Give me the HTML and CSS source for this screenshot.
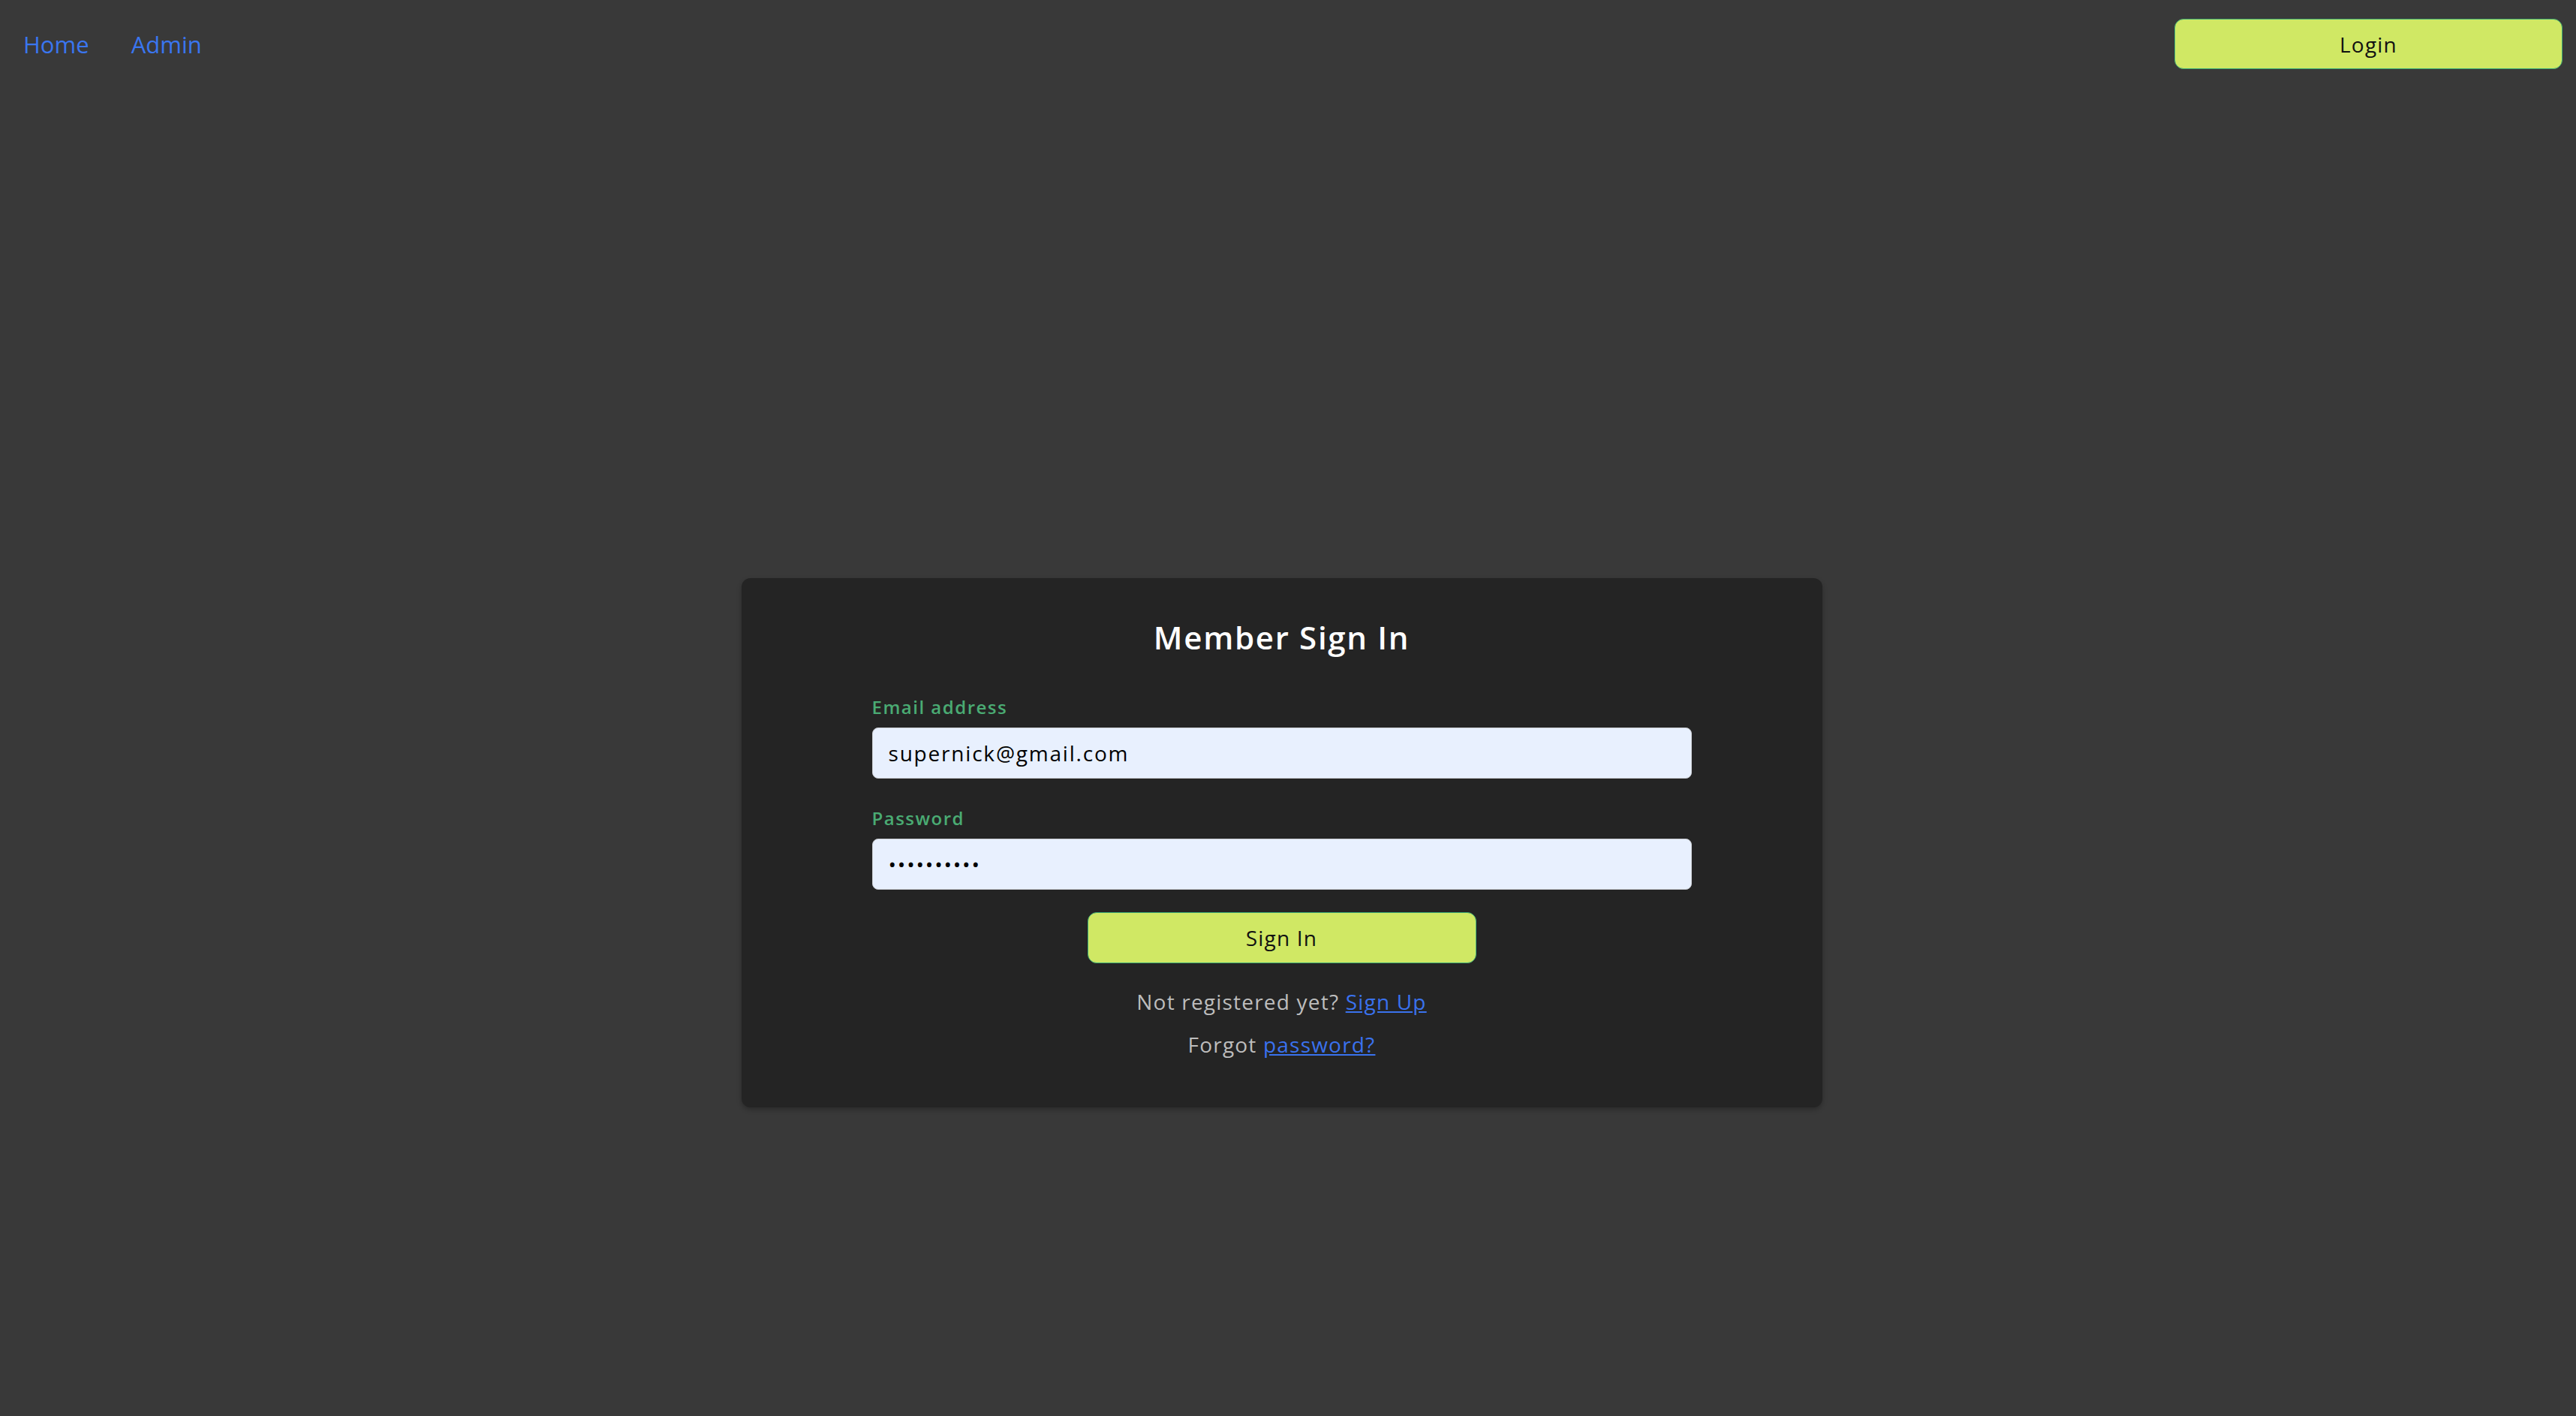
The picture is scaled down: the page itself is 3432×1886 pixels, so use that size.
FILE: index.html
```html
<!DOCTYPE html>
<html lang="en">
<head>
<meta charset="utf-8">
<title>Member Sign In</title>
<link rel="stylesheet" href="styles.css">
</head>
<body>
<header class="topbar">
  <nav class="nav">
    <a class="nav-link" href="#">Home</a>
    <a class="nav-link" href="#">Admin</a>
  </nav>
  <button class="btn btn-login" type="button">Login</button>
</header>
<main class="main">
  <section class="card">
    <h1 class="card-title">Member Sign In</h1>
    <form class="form">
      <label class="field-label" for="email">Email address</label>
      <input class="field-input" id="email" type="email" value="supernick@gmail.com">
      <label class="field-label field-label-pw" for="password">Password</label>
      <input class="field-input" id="password" type="password" value="0123456789">
      <div class="actions">
        <button class="btn btn-signin" type="button">Sign In</button>
      </div>
      <p class="note">Not registered yet? <a class="link" href="#">Sign Up</a></p>
      <p class="note note-second">Forgot <a class="link" href="#">password?</a></p>
    </form>
  </section>
</main>
</body>
</html>
```
FILE: styles.css
```css
html, body {
  margin: 0;
  padding: 0;
}
body {
  background: #393939;
  font-family: "Open Sans", "Liberation Sans", sans-serif;
  min-height: 1886px;
}
.topbar {
  display: flex;
  justify-content: space-between;
  align-items: center;
  padding: 25px 18px 0 31px;
}
.nav {
  display: flex;
  gap: 56px;
}
.nav-link {
  color: #3a76f0;
  text-decoration: none;
  font-size: 31px;
  line-height: 44px;
}
.btn {
  font-family: inherit;
  color: #111;
  background: #d0e864;
  border: 1px solid #3fae74;
  border-radius: 12px;
  font-size: 28px;
  letter-spacing: 1.2px;
  cursor: pointer;
  padding: 0;
}
.btn-login {
  width: 517px;
  height: 67px;
}
.main {
  display: flex;
  justify-content: center;
  padding: 678px 17px 0 0;
}
.card {
  width: 1440px;
  box-sizing: border-box;
  background: #242424;
  border-radius: 12px;
  padding: 49px 0 64px;
  box-shadow: 0 3px 6px rgba(0, 0, 0, 0.25);
}
.card-title {
  margin: 0;
  text-align: center;
  color: #fff;
  font-size: 42px;
  line-height: 60px;
  font-weight: 600;
  letter-spacing: 1.7px;
}
.form {
  width: 1092px;
  margin: 47px auto 0;
  display: flex;
  flex-direction: column;
}
.field-label {
  color: #4aab73;
  font-size: 24px;
  line-height: 32px;
  font-weight: 600;
  letter-spacing: 1.5px;
  margin-bottom: 11px;
}
.field-label-pw {
  margin-top: 37px;
}
.field-input {
  height: 68px;
  box-sizing: border-box;
  background: #e8f0fe;
  border: 1px solid #c9ccd2;
  border-radius: 8px;
  padding: 0 21px;
  font-family: inherit;
  font-size: 28px;
  letter-spacing: 1.8px;
  color: #000;
  outline: none;
}
.actions {
  display: flex;
  justify-content: center;
  margin-top: 30px;
}
.btn-signin {
  width: 518px;
  height: 68px;
}
.note {
  margin: 31px 0 0;
  text-align: center;
  color: #bdbdbd;
  font-size: 28px;
  line-height: 40px;
  letter-spacing: 1.2px;
}
.note-second {
  margin-top: 17px;
}
.link {
  color: #3a72ee;
  text-decoration: underline;
}
```
